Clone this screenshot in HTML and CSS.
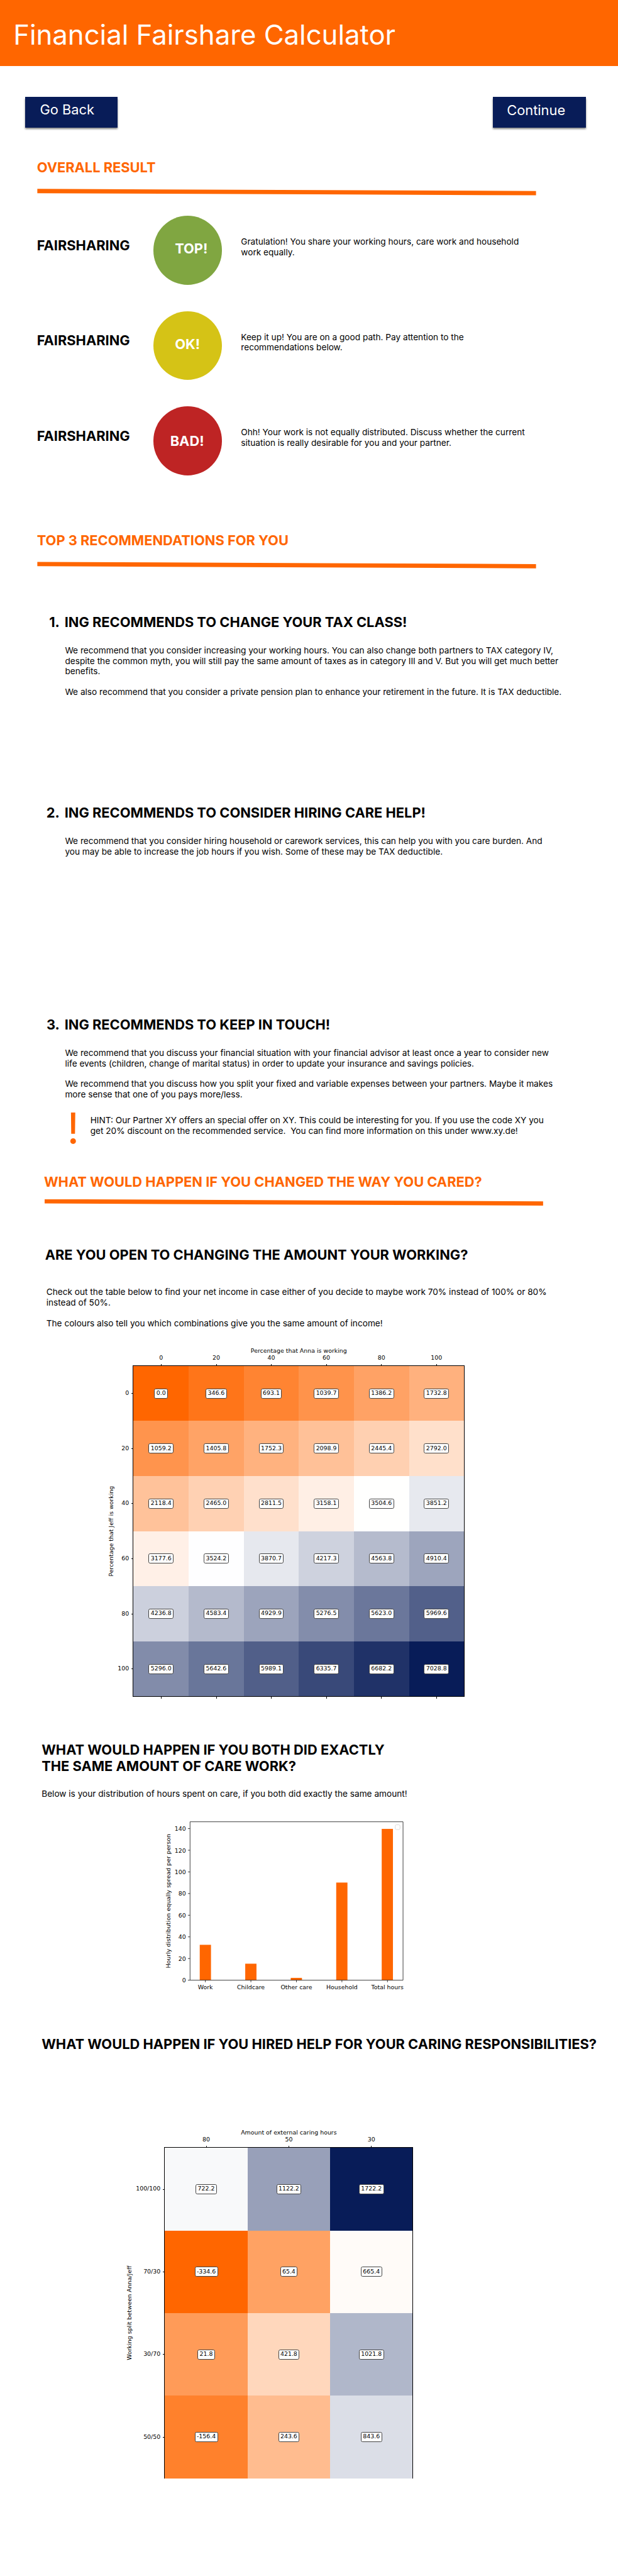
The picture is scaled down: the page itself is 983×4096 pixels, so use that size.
FILE: index.html
```html
<!DOCTYPE html>
<html lang="en">
<head>
<meta charset="utf-8">
<title>Financial Fairshare Calculator</title>
<link rel="stylesheet" href="styles.css">
</head>
<body>
<header class="banner"><h1 class="banner-title">Financial Fairshare Calculator</h1></header>

<nav class="actions">
  <a class="button button-back">Go Back</a>
  <a class="button button-next">Continue</a>
</nav>

<main>
  <section class="overall">
    <h2 class="heading accent">OVERALL RESULT</h2>
    <div class="rule"></div>
    <div class="results">
      <div class="result">
        <h3 class="heading result-label">FAIRSHARING</h3>
        <div class="badge badge-top">TOP!</div>
        <p class="copy result-text">Gratulation! You share your working hours, care work and household<br>work equally.</p>
      </div>
      <div class="result">
        <h3 class="heading result-label">FAIRSHARING</h3>
        <div class="badge badge-ok">OK!</div>
        <p class="copy result-text">Keep it up! You are on a good path. Pay attention to the<br>recommendations below.</p>
      </div>
      <div class="result">
        <h3 class="heading result-label">FAIRSHARING</h3>
        <div class="badge badge-bad">BAD!</div>
        <p class="copy result-text">Ohh! Your work is not equally distributed. Discuss whether the current<br>situation is really desirable for you and your partner.</p>
      </div>
    </div>
  </section>

  <section class="recommendations">
    <h2 class="heading accent">TOP 3 RECOMMENDATIONS FOR YOU</h2>
    <div class="rule"></div>
    <article class="rec rec-tax">
      <span class="heading rec-number">1.</span>
      <h3 class="heading">ING RECOMMENDS TO CHANGE YOUR TAX CLASS!</h3>
      <div class="copy rec-body">
        <p>We recommend that you consider increasing your working hours. You can also change both partners to TAX category IV,<br>despite the common myth, you will still pay the same amount of taxes as in category III and V. But you will get much better<br>benefits.</p>
        <p>We also recommend that you consider a private pension plan to enhance your retirement in the future. It is TAX deductible.</p>
      </div>
    </article>
    <article class="rec rec-care">
      <span class="heading rec-number">2.</span>
      <h3 class="heading">ING RECOMMENDS TO CONSIDER HIRING CARE HELP!</h3>
      <div class="copy rec-body">
        <p>We recommend that you consider hiring household or carework services, this can help you with you care burden. And<br>you may be able to increase the job hours if you wish. Some of these may be TAX deductible.</p>
      </div>
    </article>
    <article class="rec rec-touch">
      <span class="heading rec-number">3.</span>
      <h3 class="heading">ING RECOMMENDS TO KEEP IN TOUCH!</h3>
      <div class="copy rec-body">
        <p>We recommend that you discuss your financial situation with your financial advisor at least once a year to consider new<br>life events (children, change of marital status) in order to update your insurance and savings policies.</p>
        <p>We recommend that you discuss how you split your fixed and variable expenses between your partners. Maybe it makes<br>more sense that one of you pays more/less.</p>
      </div>
    </article>
    <aside class="hint">
      <span class="hint-mark">!</span>
      <p class="copy hint-text">HINT: Our Partner XY offers an special offer on XY. This could be interesting for you. If you use the code XY you<br>get 20% discount on the recommended service.&nbsp; You can find more information on this under www.xy.de!</p>
    </aside>
  </section>

  <section class="scenario-intro">
    <h2 class="heading accent">WHAT WOULD HAPPEN IF YOU CHANGED THE WAY YOU CARED?</h2>
    <div class="rule"></div>
  </section>

  <section class="scenario-work">
    <h2 class="heading">ARE YOU OPEN TO CHANGING THE AMOUNT YOUR WORKING?</h2>
    <div class="copy work-text">
      <p>Check out the table below to find your net income in case either of you decide to maybe work 70% instead of 100% or 80%<br>instead of 50%.</p>
      <p>The colours also tell you which combinations give you the same amount of income!</p>
    </div>
  </section>

  <figure class="heatmap heatmap-work">
    <figcaption class="x-title">Percentage that Anna is working</figcaption>
    <div class="x-ticks"><span>0</span><span>20</span><span>40</span><span>60</span><span>80</span><span>100</span></div>
    <div class="y-title">Percentage that Jeff is working</div>
    <div class="y-ticks"><span>0</span><span>20</span><span>40</span><span>60</span><span>80</span><span>100</span></div>
    <div class="plot">
      <div class="cell low" style="--p:100%"><span>0.0</span></div><div class="cell low" style="--p:90.14%"><span>346.6</span></div><div class="cell low" style="--p:80.28%"><span>693.1</span></div><div class="cell low" style="--p:70.42%"><span>1039.7</span></div><div class="cell low" style="--p:60.56%"><span>1386.2</span></div><div class="cell low" style="--p:50.69%"><span>1732.8</span></div>
      <div class="cell low" style="--p:69.86%"><span>1059.2</span></div><div class="cell low" style="--p:60%"><span>1405.8</span></div><div class="cell low" style="--p:50.14%"><span>1752.3</span></div><div class="cell low" style="--p:40.28%"><span>2098.9</span></div><div class="cell low" style="--p:30.42%"><span>2445.4</span></div><div class="cell low" style="--p:20.56%"><span>2792.0</span></div>
      <div class="cell low" style="--p:39.72%"><span>2118.4</span></div><div class="cell low" style="--p:29.86%"><span>2465.0</span></div><div class="cell low" style="--p:20%"><span>2811.5</span></div><div class="cell low" style="--p:10.14%"><span>3158.1</span></div><div class="cell low" style="--p:.28%"><span>3504.6</span></div><div class="cell high" style="--p:9.58%"><span>3851.2</span></div>
      <div class="cell low" style="--p:9.58%"><span>3177.6</span></div><div class="cell high" style="--p:.28%"><span>3524.2</span></div><div class="cell high" style="--p:10.14%"><span>3870.7</span></div><div class="cell high" style="--p:20%"><span>4217.3</span></div><div class="cell high" style="--p:29.86%"><span>4563.8</span></div><div class="cell high" style="--p:39.72%"><span>4910.4</span></div>
      <div class="cell high" style="--p:20.56%"><span>4236.8</span></div><div class="cell high" style="--p:30.42%"><span>4583.4</span></div><div class="cell high" style="--p:40.28%"><span>4929.9</span></div><div class="cell high" style="--p:50.14%"><span>5276.5</span></div><div class="cell high" style="--p:60%"><span>5623.0</span></div><div class="cell high" style="--p:69.86%"><span>5969.6</span></div>
      <div class="cell high" style="--p:50.69%"><span>5296.0</span></div><div class="cell high" style="--p:60.56%"><span>5642.6</span></div><div class="cell high" style="--p:70.42%"><span>5989.1</span></div><div class="cell high" style="--p:80.28%"><span>6335.7</span></div><div class="cell high" style="--p:90.14%"><span>6682.2</span></div><div class="cell high" style="--p:100%"><span>7028.8</span></div>
    </div>
    <div class="x-marks"><i></i><i></i><i></i><i></i><i></i><i></i></div>
  </figure>

  <section class="scenario-equal">
    <h2 class="heading">WHAT WOULD HAPPEN IF YOU BOTH DID EXACTLY<br>THE SAME AMOUNT OF CARE WORK?</h2>
    <p class="copy equal-text">Below is your distribution of hours spent on care, if you both did exactly the same amount!</p>
    <svg class="bar-chart" viewBox="380 4235 575 410">
      <g class="bars">
        <rect x="466" y="4530" width="26.2" height="82.3"/>
        <rect x="572" y="4574" width="26.2" height="38.3"/>
        <rect x="678" y="4607" width="26.2" height="5.3"/>
        <rect x="784" y="4385" width="26.2" height="227.3"/>
        <rect x="890" y="4260" width="26.2" height="352.3"/>
      </g>
      <path class="axes" d="M443.4 4243.4H939.7V4612.4H443.4ZM438.5 4612.4h4.9M438.5 4562h4.9M438.5 4511.5h4.9M438.5 4461.1h4.9M438.5 4410.6h4.9M438.5 4360.2h4.9M438.5 4309.7h4.9M438.5 4259.3h4.9M479.1 4612.4v4.9M585.2 4612.4v4.9M691.3 4612.4v4.9M797.3 4612.4v4.9M903.4 4612.4v4.9"/>
      <rect class="legend" x="921.6" y="4250.4" width="11.1" height="11.1" rx="2.8"/>
      <g class="y-labels">
        <text x="433.7" y="4617.6">0</text><text x="433.7" y="4567.2">20</text><text x="433.7" y="4516.7">40</text><text x="433.7" y="4466.3">60</text><text x="433.7" y="4415.8">80</text><text x="433.7" y="4365.4">100</text><text x="433.7" y="4314.9">120</text><text x="433.7" y="4264.5">140</text>
      </g>
      <g class="x-labels">
        <text x="479.1" y="4632.8">Work</text><text x="585.2" y="4632.8">Childcare</text><text x="691.3" y="4632.8">Other care</text><text x="797.3" y="4632.8">Household</text><text x="903.4" y="4632.8">Total hours</text>
        <text transform="translate(397.4 4428) rotate(-90)">Hourly distribution equally spread per person</text>
      </g>
    </svg>
  </section>

  <section class="scenario-help">
    <h2 class="heading">WHAT WOULD HAPPEN IF YOU HIRED HELP FOR YOUR CARING RESPONSIBILITIES?</h2>
  </section>

  <figure class="heatmap heatmap-help">
    <figcaption class="x-title">Amount of external caring hours</figcaption>
    <div class="x-ticks"><span>80</span><span>50</span><span>30</span></div>
    <div class="y-title">Working split between Anna/Jeff</div>
    <div class="y-ticks"><span>100/100</span><span>70/30</span><span>30/70</span><span>50/50</span></div>
    <div class="plot">
      <div class="cell high" style="--p:2.76%"><span>722.2</span></div><div class="cell high" style="--p:41.66%"><span>1122.2</span></div><div class="cell high" style="--p:100%"><span>1722.2</span></div>
      <div class="cell low" style="--p:100%"><span>-334.6</span></div><div class="cell low" style="--p:61.1%"><span>65.4</span></div><div class="cell low" style="--p:2.76%"><span>665.4</span></div>
      <div class="cell low" style="--p:65.34%"><span>21.8</span></div><div class="cell low" style="--p:26.45%"><span>421.8</span></div><div class="cell high" style="--p:31.9%"><span>1021.8</span></div>
      <div class="cell low" style="--p:82.67%"><span>-156.4</span></div><div class="cell low" style="--p:43.78%"><span>243.6</span></div><div class="cell high" style="--p:14.57%"><span>843.6</span></div>
    </div>
    <div class="x-marks"><i></i><i></i><i></i></div>
  </figure>
</main>
</body>
</html>
```
FILE: styles.css
```css
/* 1rem is ten units of the 1440-unit wide layout */
html { font-size: calc(100vw / 144); background: #fff; --orange: #f60; --navy: #081c58; }
* { box-sizing: border-box; }
body { margin: 0; font-family: Inter, "Liberation Sans", sans-serif; color: #000; overflow-x: hidden; }
h1, h2, h3, p, figure { margin: 0; }

.banner { height: 15.4rem; padding: 4.4rem 0 0 3.1rem; background: var(--orange); }
.banner-title { font-size: 6.4rem; line-height: 7.7rem; font-weight: 400; color: #fff; white-space: nowrap; }

.actions { display: flex; justify-content: space-between; padding: 7.2rem 7.5rem 0 5.8rem; }
.button { width: 21.6rem; height: 7.1rem; background: var(--navy); color: #fff; font-size: 3.2rem; line-height: 3.9rem; box-shadow: 0 .4rem .4rem rgba(0, 0, 0, .5); }
.button-back { padding: 1rem 0 0 3.5rem; }
.button-next { padding: 1.1rem 0 0 3.2rem; }

.heading { font-size: 3.2rem; line-height: 3.9rem; font-weight: 700; white-space: nowrap; }
.accent { color: var(--orange); }
.copy { font-size: 2rem; line-height: 2.4rem; white-space: nowrap; }
.copy p + p { margin-top: 2.4rem; }
.rule { width: 116.2rem; height: 1.5rem; margin: 3.1rem 0 0 .1rem; background: var(--orange); clip-path: polygon(0 0, 100% 33.33%, 100% 100%, 0 66.67%); }

.overall { padding: 7.3rem 0 0 8.6rem; }
.results { display: grid; row-gap: 6.2rem; margin-top: 4.8rem; }
.result { display: grid; grid-template-columns: 27.15rem 16rem auto; height: 16rem; justify-content: start; }
.result-label { padding-top: 4.9rem; }
.badge { height: 16rem; border-radius: 50%; color: #fff; font-size: 3.2rem; line-height: 3.9rem; font-weight: 700; padding: 5.7rem 0 0 5rem; }
.badge-top { background: #80a641; }
.badge-ok { background: #d5c316; }
.badge-bad { background: #be2424; padding: 6.1rem 0 0 3.9rem; }
.result-text { padding: 4.85rem 0 0 4.4rem; }

.recommendations { padding: 13.2rem 0 0 8.6rem; }
.rec { display: grid; grid-template-columns: 4rem auto; column-gap: 1rem; justify-content: start; margin-left: 1.45rem; }
.rec-number { text-align: right; padding-right: .15rem; }
.rec-body { grid-column: 2; padding: 3.52rem 0 0 .1rem; }
.rec-tax { margin-top: 10.55rem; }
.rec-care { margin-top: 24.98rem; }
.rec-touch { margin-top: 37.12rem; }
.hint { display: flex; margin: 1.5rem 0 0 7rem; height: 7rem; }
.hint-mark { width: 5.45rem; font-size: 10rem; line-height: 12.1rem; margin-top: -.75rem; color: var(--orange); font-weight: 400; }
.hint-text { padding-top: 2.2rem; }

.scenario-intro { padding: 8.69rem 0 0 10.25rem; }
.scenario-intro .rule { margin-top: 2.14rem; }
.scenario-work { padding: 9.59rem 0 0 10.5rem; }
.work-text { padding: 5.48rem 0 0 .3rem; }
.scenario-equal { padding: 10.46rem 0 0 9.7rem; }
.equal-text { padding-top: 3.18rem; }
.scenario-help { padding: 9.69rem 0 0 9.7rem; }

.heatmap { display: grid; justify-content: start; font-family: "DejaVu Sans", sans-serif; font-size: 1.38rem; line-height: 1.6rem; }
.heatmap-work { --cols: 6; --rows: 6; grid-template-columns: 1.6rem 4.33rem 77rem; margin: 4.53rem 0 0 25.2rem; }
.heatmap-help { --cols: 3; --rows: 4; grid-template-columns: 1.6rem 7.34rem 57.72rem; margin: 17.96rem 0 0 29.5rem; }
.x-title { grid-column: 3; text-align: center; }
.x-ticks { grid-column: 3; display: grid; grid-template-columns: repeat(var(--cols), 1fr); text-align: center; height: 2.63rem; }
.x-ticks span, .x-marks i { position: relative; }
.x-ticks span::after, .x-marks i::after { content: ""; position: absolute; left: calc(50% - .055rem); bottom: 0; width: .11rem; height: .48rem; background: #000; }
.x-marks i::after { bottom: auto; top: 0; }
.y-title { writing-mode: vertical-rl; transform: rotate(180deg); text-align: center; white-space: nowrap; }
.y-ticks { display: grid; grid-template-rows: repeat(var(--rows), 1fr); text-align: right; }
.y-ticks span { position: relative; align-self: center; padding-right: 1.05rem; }
.y-ticks span::after { content: ""; position: absolute; right: 0; top: calc(50% - .055rem); height: .11rem; width: .48rem; background: #000; }
.plot { display: grid; grid-template-columns: repeat(var(--cols), 1fr); grid-template-rows: repeat(var(--rows), 1fr); height: 77rem; outline: .12rem solid #000; outline-offset: -.06rem; }
.cell { display: grid; place-items: center; }
.cell span { border: 1px solid #444; border-radius: .4rem; background: #fff; padding: .2rem .35rem .26rem; }
.low { background: color-mix(in srgb, var(--orange) var(--p), #fff); }
.high { background: color-mix(in srgb, var(--navy) var(--p), #fff); }
.x-marks { grid-column: 3; display: grid; grid-template-columns: repeat(var(--cols), 1fr); height: 0; }

.bar-chart { display: block; width: 57.5rem; height: 41rem; margin: 4.53rem 0 0 28.3rem; font-family: "DejaVu Sans", sans-serif; font-size: 13.8px; }
.bars { fill: var(--orange); }
.axes { fill: none; stroke: #000; stroke-width: 1.1; }
.legend { fill: #fff; stroke: #d4d4d4; stroke-width: 1.2; }
.x-labels { text-anchor: middle; }
.y-labels { text-anchor: end; }
```
